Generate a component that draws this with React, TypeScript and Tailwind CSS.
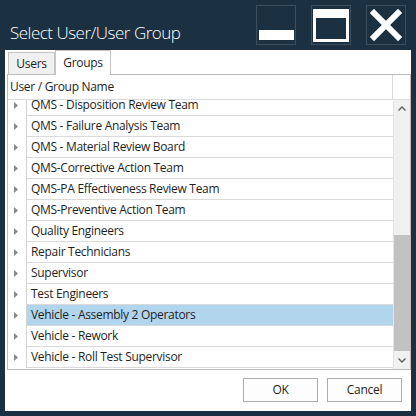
const ROWS = [
  "QMS - Disposition Review Team",
  "QMS - Failure Analysis Team",
  "QMS - Material Review Board",
  "QMS-Corrective Action Team",
  "QMS-PA Effectiveness Review Team",
  "QMS-Preventive Action Team",
  "Quality Engineers",
  "Repair Technicians",
  "Supervisor",
  "Test Engineers",
  "Vehicle - Assembly 2 Operators",
  "Vehicle - Rework",
  "Vehicle - Roll Test Supervisor",
];

const SELECTED = "Vehicle - Assembly 2 Operators";

function Expander() {
  return (
    <svg width="4" height="7" viewBox="0 0 4 7">
      <path d="M0 0 L4 3.5 L0 7 Z" fill="#8a8a8a" />
    </svg>
  );
}

function Chevron({ up }: { up?: boolean }) {
  return (
    <svg width="8" height="5" viewBox="0 0 8 5">
      <path d={up ? "M0.5 4.5 L4 1 L7.5 4.5" : "M0.5 0.5 L4 4 L7.5 0.5"} fill="none" stroke="#606060" strokeWidth="1.4" />
    </svg>
  );
}

export default function App() {
  return (
    <div
      className="flex h-[416px] w-[416px] flex-col bg-[#1b3041]"
      style={{ fontFamily: "'Open Sans', 'Noto Sans', sans-serif" }}
    >
      {/* title bar */}
      <div className="flex h-[50px] shrink-0 pr-[10px]">
        <div className="flex-1 pl-[10px] pt-[21px] text-[17px] font-light leading-[24px] tracking-[-0.5px] text-white">
          Select User/User Group
        </div>
        <div className="flex gap-[15px] pt-[5px]">
          <div className="flex h-[40px] w-[40px] items-end justify-center border border-[#3d4f5c] pb-[4px]">
            <div className="h-[10px] w-[35px] bg-white" />
          </div>
          <div className="flex h-[40px] w-[40px] items-center justify-center border border-[#3d4f5c]">
            <div className="h-[33px] w-[36px] border-x-[3px] border-t-[9px] border-b-[3px] border-white" />
          </div>
          <div className="flex h-[40px] w-[40px] items-center justify-center border border-[#3d4f5c]">
            <svg width="32" height="32" viewBox="0 0 32 32">
              <path d="M4 4 L28 28 M28 4 L4 28" stroke="#fff" strokeWidth="6" strokeLinecap="square" />
            </svg>
          </div>
        </div>
      </div>

      {/* content panel */}
      <div className="mx-[5px] flex h-[361px] w-[406px] flex-col bg-white text-[12px] tracking-[-0.3px] text-[#1e1e1e]">
        {/* tabs */}
        <div className="flex items-end pl-[3px]">
          <div className="flex h-[22px] w-[47px] items-center justify-center border border-b-0 border-[#c4c4c4] bg-[#f0f0f0]">
            Users
          </div>
          <div className="relative z-10 -mb-px flex h-[25px] w-[56px] items-center justify-center border border-b-0 border-[#c4c4c4] bg-white">
            Groups
          </div>
        </div>

        {/* list */}
        <div className="ml-[2px] flex h-[296px] w-[404px] flex-col border border-[#bcbcbc]">
          <div className="flex h-[25px] shrink-0 border-b border-[#dcdcdc]">
            <div className="flex w-[385px] items-center border-r border-[#dcdcdc] pl-[2px]">User / Group Name</div>
            <div className="flex-1" />
          </div>
          <div className="flex h-[269px]">
            <div className="w-[385px] overflow-hidden">
              <div className="-mt-[5px]">
                {ROWS.map((r) => (
                  <div key={r} className="flex h-[21px]">
                    <div className="flex w-[19px] shrink-0 items-center border-r border-[#d4d4d4] pl-[6px]">
                      <Expander />
                    </div>
                    <div
                      className={
                        "flex flex-1 items-center border-b border-[#dadada] pl-[4px] " +
                        (r === SELECTED ? "bg-[#b2d5ee]" : "")
                      }
                    >
                      {r}
                    </div>
                  </div>
                ))}
              </div>
            </div>
            <div className="flex w-[17px] flex-col border-l border-[#e4e4e4] bg-[#f0f0f0]">
              <div className="flex h-[17px] items-center justify-center">
                <Chevron up />
              </div>
              <div className="h-[118px]" />
              <div className="h-[116px] bg-[#c2c2c2]" />
              <div className="flex h-[18px] items-center justify-center">
                <Chevron />
              </div>
            </div>
          </div>
        </div>

        {/* buttons */}
        <div className="flex justify-end gap-[9px] pr-[9px] pt-[8px]">
          <button className="h-[24px] w-[75px] border border-[#adadad] bg-[#fdfdfd] text-[12px]">OK</button>
          <button className="h-[24px] w-[75px] border border-[#adadad] bg-[#fdfdfd] text-[12px]">Cancel</button>
        </div>
      </div>
    </div>
  );
}
